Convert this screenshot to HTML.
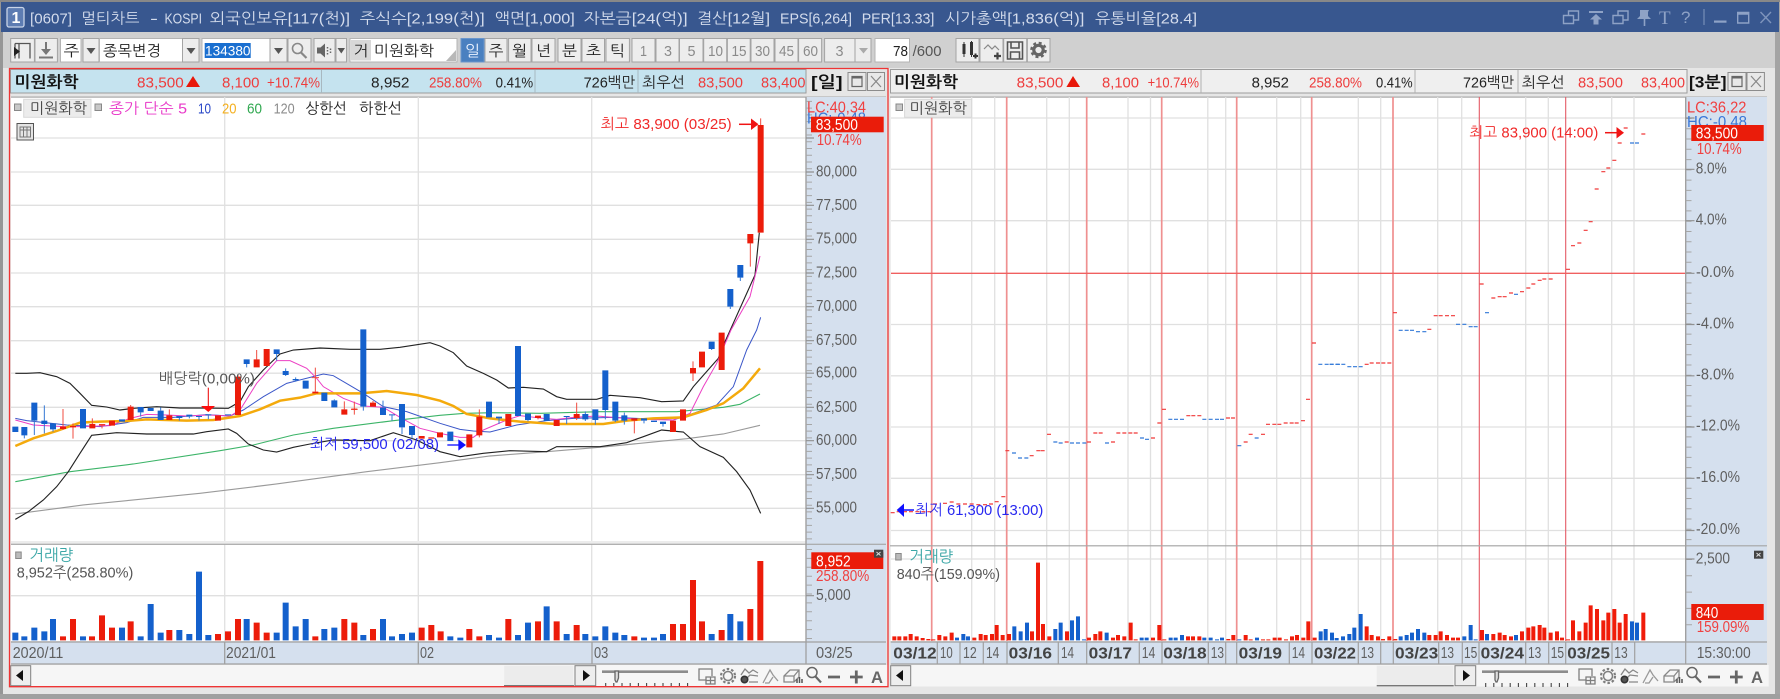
<!DOCTYPE html>
<html><head><meta charset="utf-8"><title>멀티차트</title>
<style>
html,body{margin:0;padding:0;background:#d0d0d0;overflow:hidden}
svg{display:block;font-family:"Liberation Sans","NanumGothic","Noto Sans CJK KR",sans-serif;filter:blur(.3px)}
text{font-size:15px;fill:#3c3c3c}
.ti{font-size:15px;fill:#d4dcec}
.r{fill:#ee3c3c}
.k{fill:#222}
.g{fill:#5e5e5e;font-size:16px}
.d{fill:#8a8a8a}
.b{font-weight:bold;font-size:16px;fill:#111}
.w{fill:#fff;font-size:16px}
.ar{fill:#f04040;font-size:16px}
.db{font-weight:bold;fill:#444;font-size:16px}
.btn{fill:#ededed;stroke:#a4a4a4;stroke-width:1}
.inp{fill:#fff;stroke:#b4b4b4;stroke-width:1}
</style></head>
<body>
<svg width="1780" height="699" viewBox="0 0 1780 699" xmlns="http://www.w3.org/2000/svg">
<!-- window -->
<rect width="1780" height="699" fill="#d0d0d0"/>
<rect x="0" y="68" width="1780" height="626" fill="#e6e6e6"/>
<rect x="0" y="0" width="3" height="699" fill="#969696"/>
<rect x="1775" y="0" width="5" height="699" fill="#a4a4a4"/>
<rect x="0" y="694" width="1780" height="5" fill="#a0a0a0"/>
<rect x="0" y="0" width="1780" height="2" fill="#888"/>
<rect x="1" y="2" width="1778" height="30" fill="#38578f"/>
<!-- title -->
<rect x="7" y="7.500" width="17" height="19.500" rx="2" fill="#5d7cb2" stroke="#c8d4e8" stroke-width="1.300"/>
<text x="11.500" y="23" style="font-size:16px;font-weight:bold;fill:#fff">1</text>
<g class="tt">
<text class="ti" x="30" y="23.500" textLength="42" lengthAdjust="spacingAndGlyphs">[0607]</text>
<text class="ti" x="81.500" y="23.500" textLength="58" lengthAdjust="spacingAndGlyphs">멀티차트</text>
<text class="ti" x="150" y="23.500" textLength="8" lengthAdjust="spacingAndGlyphs">-</text>
<text class="ti" x="164.500" y="23.500" textLength="37.500" lengthAdjust="spacingAndGlyphs">KOSPI</text>
<text class="ti" x="209.700" y="23.500" textLength="140.300" lengthAdjust="spacingAndGlyphs">외국인보유[117(천)]</text>
<text class="ti" x="359.700" y="23.500" textLength="125" lengthAdjust="spacingAndGlyphs">주식수[2,199(천)]</text>
<text class="ti" x="494.800" y="23.500" textLength="80" lengthAdjust="spacingAndGlyphs">액면[1,000]</text>
<text class="ti" x="583.600" y="23.500" textLength="104" lengthAdjust="spacingAndGlyphs">자본금[24(억)]</text>
<text class="ti" x="697" y="23.500" textLength="73" lengthAdjust="spacingAndGlyphs">결산[12월]</text>
<text class="ti" x="780" y="23.500" textLength="72" lengthAdjust="spacingAndGlyphs">EPS[6,264]</text>
<text class="ti" x="861.700" y="23.500" textLength="72.700" lengthAdjust="spacingAndGlyphs">PER[13.33]</text>
<text class="ti" x="945" y="23.500" textLength="139.400" lengthAdjust="spacingAndGlyphs">시가총액[1,836(억)]</text>
<text class="ti" x="1095" y="23.500" textLength="102" lengthAdjust="spacingAndGlyphs">유통비율[28.4]</text>
</g>
<g fill="none" stroke="#8ea2c6" stroke-width="1.400">
<path d="M1568.500 15V11h10v9h-5M1563.500 15.500h10v8h-10z"/>
<path d="M1613 15.500h10v8h-10zM1618 15V11h10v9h-4.500"/>
<path d="M1704 9v16" stroke="#6e86b2"/>
<path d="M1737.700 12.500h11v10.500h-11z"/>
<path d="M1737.700 13.500h11" stroke-width="2.500"/>
<path d="M1760.500 12l10.500 11M1771 12l-10.500 11" stroke="#7e94bc"/>
</g>
<g fill="#8ea2c6">
<rect x="1589" y="11" width="14" height="2"/>
<path d="M1596 14l6 5.500h-3.500v5h-5v-5H1590z"/>
<path d="M1640 10h9l-1 2v4l3 3h-14l3-3v-4z"/>
<rect x="1643.700" y="19" width="1.600" height="7"/>
<rect x="1714" y="20.500" width="12.500" height="2.200"/>
</g>
<text x="1659" y="24" style="font-family:'Liberation Serif',serif;font-size:19px;fill:#8ea2c6">T</text>
<text x="1681" y="23" style="font-size:17px;fill:#8ea2c6">?</text>

<!-- toolbar -->
<rect class="btn" x="10.700" y="38.500" width="23.700" height="23.500"/>
<rect class="btn" x="35" y="38.500" width="22.400" height="23.500"/>
<path d="M15 43.500h15v15M15 43.500v15M19 43.500v15" fill="none" stroke="#555" stroke-width="1.300"/>
<path d="M14 47l6 4.500-6 4.500z" fill="#222"/>
<path d="M46 42v11" stroke="#777" stroke-width="2"/><path d="M41 49l5 6 5-6z" fill="#777"/><path d="M39 57.500h14" stroke="#777" stroke-width="2"/>
<rect class="inp" x="60.500" y="38.500" width="20.500" height="23.500"/>
<text class="k" x="63.500" y="56" textLength="16" lengthAdjust="spacingAndGlyphs">주</text>
<rect class="btn" x="83" y="38.500" width="16" height="23.500"/>
<path d="M86.500 48h9l-4.500 6z" fill="#555"/>
<rect class="inp" x="99.500" y="38.500" width="83" height="23.500"/>
<text class="k" x="103" y="56" textLength="58" lengthAdjust="spacingAndGlyphs">종목변경</text>
<rect class="btn" x="182.500" y="38.500" width="16.500" height="23.500"/>
<path d="M186.500 48h9l-4.500 6z" fill="#555"/>
<rect class="inp" x="202" y="38.500" width="68" height="23.500"/>
<rect x="204.700" y="43" width="46" height="15" fill="#1a6fd0"/>
<text x="205" y="55.500" style="fill:#fff;font-size:14px" textLength="45.500" lengthAdjust="spacingAndGlyphs">134380</text>
<rect class="btn" x="270" y="38.500" width="17" height="23.500"/>
<path d="M274 48h9l-4.500 6z" fill="#555"/>
<rect class="btn" x="288" y="38.500" width="23" height="23.500"/>
<circle cx="297.500" cy="48.500" r="5" fill="none" stroke="#888" stroke-width="1.600"/><path d="M301 52.500l5.500 5.500" stroke="#888" stroke-width="2.200"/>
<rect class="btn" x="314" y="38.500" width="21" height="23.500"/>
<path d="M317 47.500h3.500l4.500-4v14l-4.500-4H317z" fill="#666"/><path d="M327.500 47v1.500M327.500 50v1.500M327.500 53v1.500M330.500 48.500v1.500M330.500 51.500v1.500" stroke="#666" stroke-width="1.500"/>
<rect class="btn" x="336" y="38.500" width="10.500" height="23.500"/>
<path d="M337.500 48h7.500l-3.700 5.500z" fill="#555"/>
<rect x="350" y="38.500" width="107" height="23.500" fill="#fff" stroke="#b4b4b4"/>
<rect x="351" y="40" width="20" height="20.500" fill="#d8d8d8"/>
<text class="k" x="353.500" y="56" textLength="15" lengthAdjust="spacingAndGlyphs">거</text>
<text class="k" x="374" y="56" textLength="60" lengthAdjust="spacingAndGlyphs">미원화학</text>
<path d="M456 50v11h-10z" fill="#b8b8b8"/>
<rect x="461" y="38.500" width="23" height="23.500" fill="#4a80c0" stroke="#6a96cc"/>
<text x="465" y="56" style="fill:#eaf2ff" textLength="15" lengthAdjust="spacingAndGlyphs">일</text>
<rect class="btn" x="485" y="38.500" width="22" height="23.500"/><text class="k" x="488.500" y="56" textLength="15" lengthAdjust="spacingAndGlyphs">주</text>
<rect class="btn" x="508.600" y="38.500" width="22.400" height="23.500"/><text class="k" x="512" y="56" textLength="15" lengthAdjust="spacingAndGlyphs">월</text>
<rect class="btn" x="532" y="38.500" width="23" height="23.500"/><text class="k" x="536" y="56" textLength="15" lengthAdjust="spacingAndGlyphs">년</text>
<rect class="btn" x="558" y="38.500" width="23" height="23.500"/><text class="k" x="562" y="56" textLength="15" lengthAdjust="spacingAndGlyphs">분</text>
<rect class="btn" x="582" y="38.500" width="22.500" height="23.500"/><text class="k" x="586" y="56" textLength="15" lengthAdjust="spacingAndGlyphs">초</text>
<rect class="btn" x="606" y="38.500" width="23.400" height="23.500"/><text class="k" x="610" y="56" textLength="15" lengthAdjust="spacingAndGlyphs">틱</text>
<g>
<rect class="btn" x="632" y="38.500" width="23" height="23.500"/><text class="d" x="640" y="56" textLength="7" lengthAdjust="spacingAndGlyphs">1</text>
<rect class="btn" x="656" y="38.500" width="23" height="23.500"/><text class="d" x="664" y="56" textLength="8" lengthAdjust="spacingAndGlyphs">3</text>
<rect class="btn" x="679.500" y="38.500" width="23.500" height="23.500"/><text class="d" x="687.500" y="56" textLength="8" lengthAdjust="spacingAndGlyphs">5</text>
<rect class="btn" x="703.700" y="38.500" width="23" height="23.500"/><text class="d" x="708" y="56" textLength="15" lengthAdjust="spacingAndGlyphs">10</text>
<rect class="btn" x="727.400" y="38.500" width="22.800" height="23.500"/><text class="d" x="731.500" y="56" textLength="15" lengthAdjust="spacingAndGlyphs">15</text>
<rect class="btn" x="751" y="38.500" width="23" height="23.500"/><text class="d" x="755" y="56" textLength="15" lengthAdjust="spacingAndGlyphs">30</text>
<rect class="btn" x="775" y="38.500" width="23" height="23.500"/><text class="d" x="779" y="56" textLength="15" lengthAdjust="spacingAndGlyphs">45</text>
<rect class="btn" x="798.600" y="38.500" width="23" height="23.500"/><text class="d" x="803" y="56" textLength="15" lengthAdjust="spacingAndGlyphs">60</text>
<rect class="btn" x="824.600" y="38.500" width="30.400" height="23.500"/><text class="d" x="835.500" y="56" textLength="8" lengthAdjust="spacingAndGlyphs">3</text>
<rect class="btn" x="855" y="38.500" width="16" height="23.500"/>
</g>
<path d="M859 48h9l-4.500 5.500z" fill="#aaa"/>
<rect class="inp" x="875" y="38.500" width="34.500" height="23.500"/>
<text class="k" x="893" y="56" textLength="15" lengthAdjust="spacingAndGlyphs">78</text>
<text x="912.600" y="56" style="fill:#555" textLength="29" lengthAdjust="spacingAndGlyphs">/600</text>
<rect class="btn" x="956" y="38.500" width="23" height="23.500"/>
<rect class="btn" x="980" y="38.500" width="23" height="23.500"/>
<rect class="btn" x="1003.700" y="38.500" width="23" height="23.500"/>
<rect class="btn" x="1027.400" y="38.500" width="22.600" height="23.500"/>
<path d="M962.500 44h3v10h-3zM970 42h3v13h-3z" fill="#333"/><path d="M964 42v15M971.500 41v16" stroke="#333"/><path d="M973 56h5M975.500 53.500v5" stroke="#333" stroke-width="2"/>
<path d="M984 49l4-4 4 4 3-3 4 4" fill="none" stroke="#888" stroke-width="1.200"/><path d="M994 56h7M997.500 52.500v7" stroke="#444" stroke-width="2.200"/>
<path d="M1007.500 42h15v17h-15zM1011 42v6h8v-6M1010.500 59v-7h9v7" fill="none" stroke="#555" stroke-width="1.600"/>
<circle cx="1038.500" cy="50" r="4.700" fill="none" stroke="#666" stroke-width="3.200"/><circle cx="1038.500" cy="50" r="7.200" fill="none" stroke="#666" stroke-width="2.200" stroke-dasharray="3 2.650"/>

<!-- LEFT PANEL -->
<rect x="10.500" y="69.500" width="795.500" height="23.500" fill="#c5e3ef" stroke="#9c9c9c"/>
<path d="M321.500 70v23M535 70v23M638 70v23" stroke="#a8b8c0"/>
<rect x="11" y="97" width="795" height="544" fill="#fff"/>
<rect x="11" y="96.500" width="875" height="1.200" fill="#a8a8a8"/>
<rect x="806" y="97" width="80" height="545" fill="#d5e0ee"/>
<g stroke="#e0e0e0" stroke-width="1.300" fill="none">
<path d="M11 138H806M11 172H806M11 205.300H806M11 239.300H806M11 273H806M11 306.700H806M11 340.700H806M11 373.200H806M11 407.300H806M11 440.700H806M11 474.700H806M11 508.300H806M11 595.700H806"/>
<path d="M224.700 97V641M418.300 97V641M591.700 97V641"/>
</g>
<rect x="11" y="541" width="795" height="3" fill="#ececec"/>
<rect x="11" y="543.700" width="875" height="1.200" fill="#a8a8a8"/>
<!-- legend left -->
<rect x="14.500" y="104" width="6.500" height="6.500" fill="#c8c8c8" stroke="#888"/>
<rect x="23.700" y="99.300" width="67.300" height="18" fill="#ececec" stroke="#d8d8d8"/>
<text x="30" y="113.500" textLength="57" lengthAdjust="spacingAndGlyphs" style="fill:#444">미원화학</text>
<rect x="95" y="104" width="6.500" height="6.500" fill="#c8c8c8" stroke="#888"/>
<text x="109" y="113.500" textLength="78" lengthAdjust="spacingAndGlyphs" style="fill:#e838c8">종가 단순 5</text>
<text x="198" y="113.500" textLength="13" lengthAdjust="spacingAndGlyphs" style="fill:#2a48c8">10</text>
<text x="222" y="113.500" textLength="14.500" lengthAdjust="spacingAndGlyphs" style="fill:#f4b020">20</text>
<text x="247" y="113.500" textLength="15" lengthAdjust="spacingAndGlyphs" style="fill:#30a850">60</text>
<text x="273.600" y="113.500" textLength="21" lengthAdjust="spacingAndGlyphs" style="fill:#8c8c8c">120</text>
<text class="k" x="305.400" y="113.500" textLength="41.500" lengthAdjust="spacingAndGlyphs">상한선</text>
<text class="k" x="359" y="113.500" textLength="43" lengthAdjust="spacingAndGlyphs">하한선</text>
<rect x="17" y="123.500" width="16.500" height="16.500" fill="#e4e4e4" stroke="#555"/>
<path d="M20 127h10.500v10H20zM23.500 127v10M27 127v10M20 130h10.500" fill="none" stroke="#777"/>

<!-- price chart -->
<g transform="translate(0 330) scale(.33333)" fill="none">
<path d="M46 552L250 525 600 490 830 462 1100 425 1320 398 1470 378 1640 365 1820 350 2060 326 2170 312 2280 286" stroke="#9a9a9a" stroke-width="3.400"/>
<path d="M46 455L210 425 400 402 660 362 760 345 880 315 1000 295 1180 272 1320 256 1395 250 1480 248 1620 250 1800 245 2030 245 2170 232 2220 223 2280 192" stroke="#3cb468" stroke-width="3.400"/>
<path d="M46 130L80 130 120 128 170 140 210 160 240 190 275 226 320 231 360 240 400 235 470 230 540 234 600 234 685 235 720 215 745 170 790 120 840 72 880 60 960 54 1050 58 1140 58 1200 52 1290 38 1320 48 1360 68 1400 108 1450 130 1490 150 1525 174 1570 172 1630 177 1670 200 1700 208 1790 208 1830 196 1920 203 1985 215 2050 213 2080 170 2155 85 2175 35 2265 -165 2278 -292" stroke="#222" stroke-width="3.400"/>
<path d="M46 568L85 545 130 510 170 470 205 425 240 370 275 316 350 308 440 312 580 312 620 305 685 297 710 310 745 342 790 360 830 366 880 352 930 342 1000 330 1110 332 1180 308 1250 330 1320 365 1380 380 1450 370 1530 362 1640 365 1670 350 1800 350 1880 338 1930 320 1985 300 2050 306 2100 350 2170 382 2210 425 2250 480 2282 550" stroke="#222" stroke-width="3.400"/>
<path d="M46 265L80 272 200 285 300 290 380 278 430 262 520 262 620 254 690 258 730 240 790 200 860 160 970 132 1000 137 1090 190 1150 230 1220 245 1320 280 1380 298 1420 303 1470 306 1550 285 1640 272 1720 265 1840 262 2020 270 2080 250 2150 225 2200 170 2240 60 2270 0 2282 -38" stroke="#3a56c8" stroke-width="3"/>
<path d="M46 270L100 285 190 290 250 290 330 287 390 265 440 253 500 255 560 258 625 255 690 258 720 240 770 160 830 92 870 92 920 115 950 145 970 170 1030 205 1090 228 1150 232 1200 262 1260 295 1320 310 1380 322 1420 322 1450 300 1520 270 1560 257 1630 265 1670 268 1720 262 1790 258 1840 262 1920 268 2020 270 2070 250 2110 170 2150 100 2193 0 2250 -100 2280 -222" stroke="#ec40c4" stroke-width="3"/>
<path d="M46 348L100 325 170 303 240 278 300 275 380 273 440 268 560 272 640 270 720 258 780 238 840 212 900 203 950 190 1080 190 1160 183 1250 195 1320 212 1360 228 1400 252 1470 265 1560 275 1670 282 1810 282 1880 272 1960 265 2050 262 2120 240 2170 220 2230 175 2280 115" stroke="#f4aa0c" stroke-width="7.500"/>
<path d="M73 316V325M103 272V315M133 226V310M159 298V305M422 247V260M482 232V242M538 264V272M568 260V265M597 261V272M625 256V268M740 102V112M830 72V92M857 115V138M887 142V155M1003 208V211M1090 230V242M1149 212V233M1176 256V272M1206 292V312M1236 315V325M1497 265V282M1584 270V274M1700 261V282M1756 244V273M1786 270V284M1816 240V268M1846 272V276M1873 248V284M1932 272V280M1989 282V290M2135 57V60M2191 -70V-63M2221 -157V-147" stroke="#3478d4" stroke-width="3"/>
<path d="M189 237V300M219 280V326M277 265V282M306 286V295M392 225V230M508 238V256M714 135V140M770 60V88M946 113V185M1033 214V238M1063 215V254M1119 213V218M1438 238V322M1614 264V268M1730 218V252M1730 264V270M1903 272V310M2079 94V153M2251 -260V-190M2282 -635V-615M935 143H957M1053 238H1073M297 284H316" stroke="#f04c40" stroke-width="3"/>
<path d="M46 290V306M73 291V316M103 218V272M133 272V282M159 280V298M249 237V295M366 268V275M422 231V247M452 234V243M482 242V270M538 258V264M568 254V260M597 258V261M625 253V256M684 253V256M740 88V102M830 58V72M857 123V135M887 147V151M917 152V176M973 188V213M1003 211V232M1090 -2V230M1149 233V255M1176 253V256M1206 222V292M1236 288V315M1351 305V333M1467 215V262M1497 260V265M1554 48V258M1584 251V270M1640 252V273M1700 258V261M1756 252V268M1786 238V270M1816 121V240M1846 215V272M1873 256V272M1932 265V272M1962 272V276M1989 275V282M2135 35V57M2191 -123V-70M2221 -195V-157" stroke="#1460cc" stroke-width="18"/>
<path d="M189 290V297M219 288V292M277 282V295M306 283V286M336 272V287M392 230V270M508 256V270M654 256V272M714 140V255M770 88V112M800 57V108M946 185V190M1033 238V254M1063 236V239M1119 218V230M1265 318V326M1294 322V326M1320 307V322M1408 313V352M1438 260V316M1525 252V288M1614 257V264M1670 270V288M1730 252V264M1903 265V272M2019 272V306M2049 238V272M2079 114V130M2106 65V112M2165 8V120M2251 -288V-260M2282 -615V-292" stroke="#ec1c0a" stroke-width="18"/>
<path d="M625 173V230" stroke="#f02020" stroke-width="3.500"/>
<path d="M603 228H645L625 246z" fill="#ff0c0c"/>
<path d="M1342 345H1380" stroke="#1010ff" stroke-width="4"/>
<path d="M1375 328L1398 345 1375 362z" fill="#1010ff"/>
</g>
<path d="M739 124.300H753" stroke="#f01414" stroke-width="1.500"/>
<path d="M751 118.500L758.500 124.300 751 130z" fill="#f01414"/>
<text x="159" y="383.500" textLength="96" lengthAdjust="spacingAndGlyphs" style="fill:#555">배당락(0,00%)</text>
<text x="310" y="449" textLength="129" lengthAdjust="spacingAndGlyphs" style="fill:#2828f0">최저 59,500 (02/08)</text>
<text x="600.700" y="129" textLength="131" lengthAdjust="spacingAndGlyphs" style="fill:#f02828">최고 83,900 (03/25)</text>

<!-- left axis -->
<path d="M806 97V642" stroke="#a0a0a0" stroke-width="1.400"/>
<path d="M809 97V542" stroke="#a6a6a6" stroke-width="6" stroke-dasharray="1 5.730" stroke-dashoffset="-3.900" fill="none"/>
<path d="M806 138h8M806 172h8M806 205.300h8M806 239.300h8M806 273h8M806 306.700h8M806 340.700h8M806 373.200h8M806 407.300h8M806 440.700h8M806 474.700h8M806 508.300h8M806 595.700h8" stroke="#909090" stroke-width="1.200"/>
<path d="M809 545V640" stroke="#a6a6a6" stroke-width="6" stroke-dasharray="1 7.900" stroke-dashoffset="-4" fill="none"/>
<g>
<text class="g" x="816" y="176.500" textLength="41" lengthAdjust="spacingAndGlyphs">80,000</text>
<text class="g" x="816" y="210.100" textLength="41" lengthAdjust="spacingAndGlyphs">77,500</text>
<text class="g" x="816" y="243.500" textLength="41" lengthAdjust="spacingAndGlyphs">75,000</text>
<text class="g" x="816" y="277.500" textLength="41" lengthAdjust="spacingAndGlyphs">72,500</text>
<text class="g" x="816" y="310.800" textLength="41" lengthAdjust="spacingAndGlyphs">70,000</text>
<text class="g" x="816" y="345.100" textLength="41" lengthAdjust="spacingAndGlyphs">67,500</text>
<text class="g" x="816" y="377.500" textLength="41" lengthAdjust="spacingAndGlyphs">65,000</text>
<text class="g" x="816" y="411.800" textLength="41" lengthAdjust="spacingAndGlyphs">62,500</text>
<text class="g" x="816" y="445.100" textLength="41" lengthAdjust="spacingAndGlyphs">60,000</text>
<text class="g" x="816" y="479.100" textLength="41" lengthAdjust="spacingAndGlyphs">57,500</text>
<text class="g" x="816" y="512.500" textLength="41" lengthAdjust="spacingAndGlyphs">55,000</text>
</g>
<text class="ar" x="807" y="112.500" textLength="59" lengthAdjust="spacingAndGlyphs">LC:40,34</text>
<text x="807" y="123.500" style="font-size:16px;fill:#3a78d8" textLength="59" lengthAdjust="spacingAndGlyphs">HC:-0,48</text>
<rect x="811" y="116.700" width="72.700" height="15.600" fill="#ea1c0a"/>
<text class="w" x="815.700" y="130" textLength="42.300" lengthAdjust="spacingAndGlyphs">83,500</text>
<text class="ar" x="816.700" y="145" textLength="45" lengthAdjust="spacingAndGlyphs">10.74%</text>
<!-- info row text left -->
<text class="b" x="14.500" y="87.500" textLength="64" lengthAdjust="spacingAndGlyphs">미원화학</text>
<text class="r" x="137" y="87.500" textLength="46.700" lengthAdjust="spacingAndGlyphs">83,500</text>
<path d="M193 76L200 87H186z" fill="#e8180a"/>
<text class="r" x="222" y="87.500" textLength="37.500" lengthAdjust="spacingAndGlyphs">8,100</text>
<text class="r" x="267" y="87.500" textLength="53" lengthAdjust="spacingAndGlyphs">+10.74%</text>
<text class="k" x="371" y="87.500" textLength="38.500" lengthAdjust="spacingAndGlyphs">8,952</text>
<text class="r" x="429" y="87.500" textLength="53" lengthAdjust="spacingAndGlyphs">258.80%</text>
<text class="k" x="495.600" y="87.500" textLength="37.500" lengthAdjust="spacingAndGlyphs">0.41%</text>
<text class="k" x="583.600" y="87.500" textLength="51.500" lengthAdjust="spacingAndGlyphs">726백만</text>
<text class="k" x="642" y="87.500" textLength="43" lengthAdjust="spacingAndGlyphs">최우선</text>
<text class="r" x="698" y="87.500" textLength="45" lengthAdjust="spacingAndGlyphs">83,500</text>
<text class="r" x="761" y="87.500" textLength="44.500" lengthAdjust="spacingAndGlyphs">83,400</text>
<text class="b" x="811" y="87.500" textLength="31.600" lengthAdjust="spacingAndGlyphs">[일]</text>
<rect x="848" y="72.500" width="18" height="18" fill="#e8e8e8" stroke="#8c8c8c"/>
<path d="M852 76.500h10v10h-10z" fill="none" stroke="#666" stroke-width="1.200"/><path d="M852 77.500h10" stroke="#666" stroke-width="2"/>
<rect x="867.500" y="72.500" width="17" height="18" fill="#e8e8e8" stroke="#8c8c8c"/>
<path d="M871 76l10 11M881 76l-10 11" stroke="#888" stroke-width="1.200"/>

<!-- left volume -->
<g transform="translate(0 535) scale(.33333)" fill="none">
<path d="M46 293V316M73 304V316M103 278V316M133 289V316M159 252V316M249 304V316M366 278V316M422 304V316M452 207V316M482 293V316M538 285V316M568 297V316M597 110V316M625 300V316M740 252V316M830 293V316M857 203V316M887 274V316M917 252V316M973 282V316M1003 278V316M1090 300V316M1149 252V316M1176 304V316M1206 297V316M1236 293V316M1351 304V316M1381 308V316M1467 300V316M1497 308V316M1554 300V316M1584 263V316M1640 214V316M1700 297V316M1756 297V316M1786 304V316M1816 274V316M1846 293V316M1873 300V316M1932 308V316M1962 308V316M1989 297V316M2135 297V316M2191 237V316M2221 259V316" stroke="#1460cc" stroke-width="18"/>
<path d="M189 304V316M219 252V316M276 304V316M306 241V316M336 278V316M392 259V316M508 285V316M654 297V316M684 289V316M714 252V316M770 263V316M800 293V316M946 304V316M1033 252V316M1063 263V316M1119 282V316M1265 278V316M1294 270V316M1322 289V316M1408 282V316M1438 304V316M1525 252V316M1614 259V316M1670 259V316M1730 270V316M1903 304V316M2019 267V316M2049 267V316M2079 135V316M2106 259V316M2165 285V316M2251 222V316M2281 78V316" stroke="#ec1c0a" stroke-width="18"/>
</g>
<rect x="15.700" y="552" width="5.500" height="6.500" fill="#bbb" stroke="#888"/>
<text x="29.300" y="560.500" textLength="44" lengthAdjust="spacingAndGlyphs" style="fill:#3aa6a6;font-size:16px">거래량</text>
<text x="16.700" y="577.500" textLength="116.600" lengthAdjust="spacingAndGlyphs" style="fill:#555">8,952주(258.80%)</text>
<rect x="811.300" y="552.300" width="72" height="16.700" fill="#ea1c0a"/>
<text class="w" x="816" y="566.500" textLength="34.700" lengthAdjust="spacingAndGlyphs">8,952</text>
<text class="ar" x="816" y="581" textLength="53.300" lengthAdjust="spacingAndGlyphs">258.80%</text>
<text class="g" x="816" y="600" textLength="34.700" lengthAdjust="spacingAndGlyphs">5,000</text>
<rect x="874" y="549.700" width="9.300" height="8" fill="#444"/><path d="M876.500 552l4 3.500M880.500 552l-4 3.500" stroke="#ddd"/>

<!-- left date strip -->
<rect x="11" y="642" width="875" height="22.300" fill="#d5e0ee"/>
<path d="M11 642H886M11 664H886M224.700 642v22M418.300 642v22M592 642v22M806 642v22" stroke="#a0a0a0" stroke-width="1.300"/>
<text class="g" x="12.700" y="658" textLength="50.600" lengthAdjust="spacingAndGlyphs">2020/11</text>
<text class="g" x="226" y="658" textLength="50" lengthAdjust="spacingAndGlyphs">2021/01</text>
<text class="g" x="420" y="658" textLength="14" lengthAdjust="spacingAndGlyphs">02</text>
<text class="g" x="594" y="658" textLength="14.300" lengthAdjust="spacingAndGlyphs">03</text>
<text class="g" x="816" y="658" textLength="36.700" lengthAdjust="spacingAndGlyphs">03/25</text>

<!-- left scrollbar -->
<rect x="11" y="665" width="877" height="21.500" fill="#f6f6f6"/>
<rect x="10.700" y="665.700" width="20" height="20" fill="#eeeeee" stroke="#808080"/><path d="M23 670v11l-7-5.500z" fill="#111"/>
<rect x="504.300" y="665.700" width="69" height="19.500" fill="#ececec"/><path d="M504 685.700h70" stroke="#777" stroke-width="1.400"/>
<rect x="575" y="665.700" width="20.700" height="20" fill="#eeeeee" stroke="#808080"/><path d="M583 670v11l7-5.500z" fill="#111"/>

<!-- tool group left -->
<g id="tools" fill="none" stroke="#7e7e7e" stroke-width="1.300">
<path d="M602 671.700h86" stroke="#8c8c8c" stroke-width="2.600"/>
<path d="M615 671h3.500v7l-1.500 4h-1l-1-2z" fill="#ddd" stroke="#666"/>
<path d="M605.700 683V687M613.800 683V687M622 683V687M630.200 683V687M638.400 683V687M646.600 683V687M654.800 683V687M663 683V687M671.200 683V687M679.400 683V687M687.600 683V687" stroke="#444" stroke-width="1.100"/>
<path d="M706 680h-7v-11h13v7"/><path d="M706 677h9v7h-9zM710.500 677v7M706 680.500h9"/>
<circle cx="728" cy="676" r="4.500" stroke-width="1.500"/><circle cx="728" cy="676" r="7" stroke-width="2.200" stroke-dasharray="2.500 2"/>
<path d="M741 675l4-6 4 4 4-3 5 3M746 679l4-4 8 1M749 682h9" stroke="#888"/>
<circle cx="744.500" cy="679.500" r="3.200" fill="#555" stroke="#333" stroke-width="1.600"/>
<path d="M763 683l7-13 3 5 5 6M765 683h4l4-6" stroke="#999"/>
<path d="M784 676l6-6h9v7l-5 5h-10zM784 676h10v6M794 676l5-6" stroke="#888"/>
<path d="M797 683v-4M799.500 683v-6M802 683v-4" stroke="#555" stroke-width="1.500"/>
<circle cx="812" cy="672.500" r="5"  stroke="#666" stroke-width="1.500"/><path d="M815.500 676.500l5.500 6" stroke="#666" stroke-width="2.200"/>
<path d="M828 677h12M850 677h12.700M856.300 670.500v13" stroke="#666" stroke-width="2.800"/>
</g>
<text x="871" y="683" textLength="12" lengthAdjust="spacingAndGlyphs" style="font-weight:bold;font-size:17px;fill:#666">A</text>

<!-- red frame -->
<path d="M9.500 68.500H888V686.700H9.500z" fill="none" stroke="#ee3434" stroke-width="1.300"/>

<!-- RIGHT PANEL -->
<rect x="890.500" y="69.500" width="796.500" height="23.500" fill="#efefef" stroke="#9c9c9c"/>
<path d="M1201 70v23M1415 70v23M1518 70v23" stroke="#b0b0b0"/>
<rect x="890.700" y="97" width="794.800" height="544" fill="#fff"/>
<rect x="890" y="96.500" width="877" height="1.200" fill="#a8a8a8"/>
<rect x="1685.500" y="97" width="81.500" height="545" fill="#d5e0ee"/>
<g stroke="#e0e0e0" stroke-width="1.300" fill="none">
<path d="M891 118H1685M891 169.300H1685M891 220.700H1685M891 324.500H1685M891 375.800H1685M891 427H1685M891 478.300H1685M891 530.500H1685M891 559H1685"/>
<path d="M971.700 97V641M994.700 97V641M1046.700 97V641M1069.300 97V641M1128 97V641M1150.500 97V641M1207.800 97V641M1225.700 97V641M1276.700 97V641M1300.700 97V641M1358.300 97V641M1380.700 97V641M1437.700 97V641M1461.700 97V641M1525.700 97V641M1548.300 97V641M1611.700 97V641M1634 97V641"/>
</g>
<path d="M931.700 97V641M1006.700 97V641M1086.700 97V641M1161.700 97V641M1236.700 97V641M1311.700 97V641M1393 97V641" stroke="#ef9090" stroke-width="1.700" fill="none"/>
<path d="M1479.300 97V641M1565.700 97V641" stroke="#e45a66" stroke-width="1.100" fill="none"/>
<path d="M891 273.300H1685" stroke="#f06060" stroke-width="1.400"/>
<rect x="890" y="545.200" width="877" height="1.200" fill="#a8a8a8"/>

<rect x="896" y="104" width="6.500" height="6.500" fill="#c8c8c8" stroke="#888"/>
<rect x="904.600" y="99.300" width="67" height="18" fill="#ececec" stroke="#d8d8d8"/>
<text x="909.600" y="113.500" textLength="57.400" lengthAdjust="spacingAndGlyphs" style="fill:#444">미원화학</text>

<!-- right dashes -->
<g transform="translate(888 250) scale(.33333)" fill="none" stroke-width="3.500">
<path d="M8 788h12M26 785h12M45 785h12M63 785h12M82 785h12M100 785h12M118 785h12M135 762h12M165 760h12M185 756h12M205 762h12M225 762h12M245 762h12M265 764h12M285 764h12M303 762h12M320 755h12M340 740h12M352 602h12M425 617h12M445 602h12M458 602h12M477 553h12M530 576h12M597 576h12M616 549h12M632 549h12M669 576h12M685 549h12M703 549h12M721 549h12M737 549h12M789 564h12M808 519h12M822 478h12M895 497h12M910 497h12M928 497h12M1014 504h12M1029 504h12M1067 576h12M1082 553h12M1119 553h12M1134 523h12M1153 523h12M1168 523h12M1187 519h12M1205 519h12M1220 519h12M1239 512h12M1254 448h12M1272 279h12" stroke="#f03838"/>
<path d="M372 609h12M390 624h12M409 624h12M496 576h12M512 579h12M546 579h12M564 579h12M583 579h12M651 579h12M756 564h12M771 568h12M841 508h12M858 508h12M876 508h12M943 508h12M962 508h12M981 508h12M996 508h12M1048 587h12M1100 564h12M1291 343h12M1310 343h12M1325 343h12M1344 343h12" stroke="#3078d8"/>
</g>
<g transform="translate(1328 100) scale(.33333)" fill="none" stroke-width="3.500">
<path d="M110 793h12M125 789h12M144 789h12M160 789h12M178 789h12M195 638h12M298 688h12M317 647h12M332 647h12M351 647h12M369 647h12M455 552h12M490 594h12M509 590h12M524 590h12M543 579h12M576 575h12M595 564h12M610 552h12M629 541h12M643 537h12M662 537h12M714 508h12M729 437h12M748 429h12M767 391h12M782 365h12M800 267h12M820 215h12M835 204h12M853 181h12M869 129h12M887 84h12M940 102h12" stroke="#f03838"/>
<path d="M5 793h12M22 793h12M40 793h12M58 800h12M75 800h12M92 800h12M212 691h12M230 691h12M246 691h12M264 695h12M283 695h12M384 673h12M403 673h12M422 680h12M437 680h12M471 638h12M558 583h12M906 129h12M921 129h12" stroke="#3078d8"/>
</g>
<!-- annotations right -->
<text x="1469.300" y="137.500" textLength="129" lengthAdjust="spacingAndGlyphs" style="fill:#f02828">최고 83,900 (14:00)</text>
<path d="M1605 132.700H1618" stroke="#f01414" stroke-width="1.500"/>
<path d="M1616.500 127L1624 132.700 1616.500 138.500z" fill="#f01414"/>
<text x="915" y="515" textLength="128.300" lengthAdjust="spacingAndGlyphs" style="fill:#2828f0">최저 61,300 (13:00)</text>
<path d="M903 510H914" stroke="#1010ff" stroke-width="1.500"/>
<path d="M904 503.500L896.700 510 904 517z" fill="#1010ff"/>

<!-- right axis -->
<path d="M1685.700 97V642" stroke="#a0a0a0" stroke-width="1.400"/>
<path d="M1688.500 118V542" stroke="#a6a6a6" stroke-width="6" stroke-dasharray="1 9.270" fill="none"/>
<path d="M1685.500 118h9M1685.500 169.300h9M1685.500 220.700h9M1685.500 273.300h9M1685.500 324.500h9M1685.500 375.800h9M1685.500 427h9M1685.500 478.300h9M1685.500 530.500h9" stroke="#909090" stroke-width="1.200"/>
<path d="M1689 559V640" stroke="#a6a6a6" stroke-width="6" stroke-dasharray="1 15.300" fill="none"/>
<text class="g" x="1695.700" y="173.500" textLength="31" lengthAdjust="spacingAndGlyphs">8.0%</text>
<text class="g" x="1695.700" y="224.500" textLength="31" lengthAdjust="spacingAndGlyphs">4.0%</text>
<text class="g" x="1696" y="277" textLength="38" lengthAdjust="spacingAndGlyphs">-0.0%</text>
<text class="g" x="1696" y="328.500" textLength="38" lengthAdjust="spacingAndGlyphs">-4.0%</text>
<text class="g" x="1696" y="379.500" textLength="38" lengthAdjust="spacingAndGlyphs">-8.0%</text>
<text class="g" x="1696" y="430.500" textLength="44" lengthAdjust="spacingAndGlyphs">-12.0%</text>
<text class="g" x="1696" y="482" textLength="44" lengthAdjust="spacingAndGlyphs">-16.0%</text>
<text class="g" x="1696" y="534" textLength="44" lengthAdjust="spacingAndGlyphs">-20.0%</text>
<text class="ar" x="1687" y="112.500" textLength="59.400" lengthAdjust="spacingAndGlyphs">LC:36,22</text>
<text x="1687" y="127" style="font-size:16px;fill:#3a78d8" textLength="60" lengthAdjust="spacingAndGlyphs">HC:-0.48</text>
<rect x="1691.300" y="125" width="72.400" height="16" fill="#ea1c0a"/>
<text class="w" x="1695.700" y="138.500" textLength="42.300" lengthAdjust="spacingAndGlyphs">83,500</text>
<text class="ar" x="1696.700" y="154" textLength="45" lengthAdjust="spacingAndGlyphs">10.74%</text>
<!-- info row text right -->
<text class="b" x="894" y="87.500" textLength="64" lengthAdjust="spacingAndGlyphs">미원화학</text>
<text class="r" x="1016.700" y="87.500" textLength="46.700" lengthAdjust="spacingAndGlyphs">83,500</text>
<path d="M1073 76L1080 87H1066.400z" fill="#e8180a"/>
<text class="r" x="1102" y="87.500" textLength="37" lengthAdjust="spacingAndGlyphs">8,100</text>
<text class="r" x="1147.600" y="87.500" textLength="51.400" lengthAdjust="spacingAndGlyphs">+10.74%</text>
<text class="k" x="1251.600" y="87.500" textLength="37.400" lengthAdjust="spacingAndGlyphs">8,952</text>
<text class="r" x="1309" y="87.500" textLength="53" lengthAdjust="spacingAndGlyphs">258.80%</text>
<text class="k" x="1376" y="87.500" textLength="36.700" lengthAdjust="spacingAndGlyphs">0.41%</text>
<text class="k" x="1463" y="87.500" textLength="51" lengthAdjust="spacingAndGlyphs">726백만</text>
<text class="k" x="1521.700" y="87.500" textLength="43" lengthAdjust="spacingAndGlyphs">최우선</text>
<text class="r" x="1578" y="87.500" textLength="45" lengthAdjust="spacingAndGlyphs">83,500</text>
<text class="r" x="1641" y="87.500" textLength="44" lengthAdjust="spacingAndGlyphs">83,400</text>
<text class="b" x="1689" y="87.500" textLength="37.500" lengthAdjust="spacingAndGlyphs">[3분]</text>
<rect x="1728" y="72.500" width="18" height="18" fill="#e8e8e8" stroke="#8c8c8c"/>
<path d="M1732 76.500h10v10h-10z" fill="none" stroke="#666" stroke-width="1.200"/><path d="M1732 77.500h10" stroke="#666" stroke-width="2"/>
<rect x="1747" y="72.500" width="17.400" height="18" fill="#e8e8e8" stroke="#8c8c8c"/>
<path d="M1751 76l10 11M1761 76l-10 11" stroke="#888" stroke-width="1.200"/>

<!-- right volume -->
<g transform="translate(880 535) scale(.33333)" fill="none" stroke-width="12">
<path d="M43 304V316M58 304V316M76 304V316M92 297V316M110 304V316M128 309V316M145 312V316M160 313V316M178 300V316M196 304V316M215 293V316M283 308V316M302 297V316M317 300V316M336 297V316M350 270V316M368 300V316M387 297V316M456 289V316M474 83V316M489 267V316M508 304V316M561 289V316M627 308V316M646 297V316M661 289V316M699 308V316M714 300V316M733 304V316M752 263V316M767 313V316M819 308V316M838 270V316M853 313V316M924 304V316M939 304V316M958 304V316M1045 312V316M1060 300V316M1097 300V316M1112 313V316M1149 313V316M1165 313V316M1184 308V316M1199 308V316M1218 313V316M1236 304V316M1251 300V316M1270 308V316M1285 259V316M1304 308V316M1460 274V316M1475 300V316M1494 304V316M1509 312V316M1528 304V316M1546 312V316M1648 300V316M1667 300V316M1682 289V316M1701 300V316M1719 308V316M1734 308V316M1806 285V316M1840 297V316M1859 293V316M1874 300V316M1893 304V316M1926 289V316M1945 278V316M1960 274V316M1979 270V316M1993 278V316M2012 293V316M2031 289V316M2046 308V316M2064 313V316M2079 256V316M2098 289V316M2117 263V316M2132 211V316M2151 222V316M2170 256V316M2185 233V316M2203 222V316M2219 263V316M2237 237V316M2290 233V316" stroke="#f01c0a"/>
<path d="M231 308V316M250 297V316M264 304V316M403 274V316M422 289V316M441 263V316M526 282V316M542 263V316M576 256V316M594 244V316M612 313V316M680 293V316M785 308V316M800 308V316M872 308V316M887 308V316M906 300V316M973 308V316M992 308V316M1011 313V316M1026 308V316M1078 313V316M1131 308V316M1322 289V316M1337 282V316M1356 293V316M1370 309V316M1389 304V316M1408 297V316M1423 278V316M1442 237V316M1562 304V316M1580 300V316M1596 293V316M1614 282V316M1633 293V316M1753 304V316M1772 270V316M1787 313V316M1821 297V316M1908 300V316M2256 259V316M2271 263V316" stroke="#1460cc"/>
</g>
<rect x="895.700" y="553.500" width="5.500" height="6.500" fill="#bbb" stroke="#888"/>
<text x="909.300" y="562" textLength="44" lengthAdjust="spacingAndGlyphs" style="fill:#3aa6a6;font-size:16px">거래량</text>
<text x="896.700" y="579" textLength="103.300" lengthAdjust="spacingAndGlyphs" style="fill:#555">840주(159.09%)</text>
<rect x="1691.300" y="604" width="72.400" height="16" fill="#ea1c0a"/>
<text class="w" x="1695.700" y="618" textLength="22.600" lengthAdjust="spacingAndGlyphs">840</text>
<text class="ar" x="1696.700" y="632" textLength="52.600" lengthAdjust="spacingAndGlyphs">159.09%</text>
<text class="g" x="1695.700" y="563.500" textLength="34.300" lengthAdjust="spacingAndGlyphs">2,500</text>
<path d="M1685.500 559h9" stroke="#909090" stroke-width="1.200"/>
<rect x="1754" y="550.700" width="9.300" height="8" fill="#444"/><path d="M1756.500 553l4 3.500M1760.500 553l-4 3.500" stroke="#ddd"/>

<!-- right date strip -->
<rect x="890.700" y="642" width="876.300" height="22.300" fill="#d5e0ee"/>
<path d="M890.700 642H1767M890.700 664H1767M937.300 642v22M960 642v22M983.300 642v22M1007 642v22M1058.300 642v22M1086.700 642v22M1139.300 642v22M1162 642v22M1208.300 642v22M1225.700 642v22M1236.700 642v22M1289.300 642v22M1312 642v22M1358.300 642v22M1380.700 642v22M1393.300 642v22M1438.700 642v22M1462.300 642v22M1479 642v22M1525.700 642v22M1548.700 642v22M1565.700 642v22M1612 642v22M1634.700 642v22M1685.700 642v22" stroke="#a0a0a0" stroke-width="1.200" fill="none"/>
<g>
<text class="db" x="893.300" y="658.500" textLength="43.400" lengthAdjust="spacingAndGlyphs">03/12</text>
<text class="g" x="940" y="658" textLength="12.700" lengthAdjust="spacingAndGlyphs">10</text>
<text class="g" x="963" y="658" textLength="13.700" lengthAdjust="spacingAndGlyphs">12</text>
<text class="g" x="986" y="658" textLength="13.300" lengthAdjust="spacingAndGlyphs">14</text>
<text class="db" x="1008.700" y="658.500" textLength="43.300" lengthAdjust="spacingAndGlyphs">03/16</text>
<text class="g" x="1061" y="658" textLength="13" lengthAdjust="spacingAndGlyphs">14</text>
<text class="db" x="1088.700" y="658.500" textLength="43.300" lengthAdjust="spacingAndGlyphs">03/17</text>
<text class="g" x="1141.700" y="658" textLength="13.600" lengthAdjust="spacingAndGlyphs">14</text>
<text class="db" x="1163.300" y="658.500" textLength="43.400" lengthAdjust="spacingAndGlyphs">03/18</text>
<text class="g" x="1210.700" y="658" textLength="13.300" lengthAdjust="spacingAndGlyphs">13</text>
<text class="db" x="1238.700" y="658.500" textLength="43.300" lengthAdjust="spacingAndGlyphs">03/19</text>
<text class="g" x="1291.700" y="658" textLength="13.300" lengthAdjust="spacingAndGlyphs">14</text>
<text class="db" x="1314" y="658.500" textLength="42" lengthAdjust="spacingAndGlyphs">03/22</text>
<text class="g" x="1360.700" y="658" textLength="13.300" lengthAdjust="spacingAndGlyphs">13</text>
<text class="db" x="1395" y="658.500" textLength="43.300" lengthAdjust="spacingAndGlyphs">03/23</text>
<text class="g" x="1440.700" y="658" textLength="13.300" lengthAdjust="spacingAndGlyphs">13</text>
<text class="g" x="1464" y="658" textLength="13.300" lengthAdjust="spacingAndGlyphs">15</text>
<text class="db" x="1480.700" y="658.500" textLength="43.300" lengthAdjust="spacingAndGlyphs">03/24</text>
<text class="g" x="1528" y="658" textLength="13.300" lengthAdjust="spacingAndGlyphs">13</text>
<text class="g" x="1550.700" y="658" textLength="13.300" lengthAdjust="spacingAndGlyphs">15</text>
<text class="db" x="1567.300" y="658.500" textLength="42.700" lengthAdjust="spacingAndGlyphs">03/25</text>
<text class="g" x="1614.300" y="658" textLength="13.400" lengthAdjust="spacingAndGlyphs">13</text>
<text class="g" x="1696.700" y="658" textLength="54" lengthAdjust="spacingAndGlyphs">15:30:00</text>
</g>
<!-- right scrollbar -->
<rect x="890.700" y="665" width="878" height="21.500" fill="#f6f6f6"/>
<rect x="890.700" y="665.700" width="20" height="20" fill="#eeeeee" stroke="#808080"/><path d="M903 670v11l-7-5.500z" fill="#111"/>
<rect x="1376.700" y="665.700" width="76.600" height="19.500" fill="#ececec"/><path d="M1376.700 685.700h77" stroke="#777" stroke-width="1.400"/>
<rect x="1455" y="665.700" width="20.700" height="20" fill="#eeeeee" stroke="#808080"/><path d="M1463 670v11l7-5.500z" fill="#111"/>
<use href="#tools" x="880"/>
<text x="1751" y="683" textLength="12" lengthAdjust="spacingAndGlyphs" style="font-weight:bold;font-size:17px;fill:#666">A</text>
</svg>
</body></html>
